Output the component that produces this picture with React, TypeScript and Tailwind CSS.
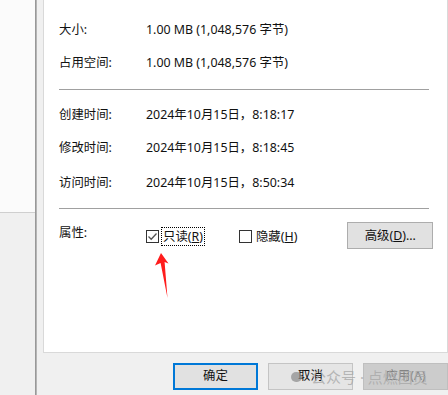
import React from "react";

const font = {
  fontFamily: '"Segoe UI", "Noto Sans", "Noto Sans CJK SC", sans-serif',
};

const rows1 = [
  { label: "大小:", value: "1.00 MB (1,048,576 字节)" },
  { label: "占用空间:", value: "1.00 MB (1,048,576 字节)" },
];

const rows2 = [
  { label: "创建时间:", value: "2024年10月15日，8:18:17" },
  { label: "修改时间:", value: "2024年10月15日，8:18:45" },
  { label: "访问时间:", value: "2024年10月15日，8:50:34" },
];

function Row({ label, value, className }: { label: string; value: string; className?: string }) {
  return (
    <div className={"flex h-[20px] items-center leading-[20px] " + (className ?? "")}>
      <div className="w-[87px]">{label}</div>
      <div>{value}</div>
    </div>
  );
}

function Checkbox({ checked }: { checked?: boolean }) {
  return (
    <div className="w-[13px] h-[13px] border border-[#333] bg-white flex items-center justify-center">
      {checked && (
        <svg width="11" height="11" viewBox="0 0 11 11">
          <path d="M1.5 5.5 L4.2 8.2 L9.5 2.5" fill="none" stroke="#555" strokeWidth="1.3" />
        </svg>
      )}
    </div>
  );
}

export default function App() {
  return (
    <div
      className="w-[448px] h-[395px] flex overflow-hidden bg-[#f0f0f0] text-[12.4px] text-[#111] relative"
      style={font}
    >
      {/* background window on the left */}
      <div className="w-[36px] flex flex-col">
        <div className="h-[213px] bg-[#fbfbfb] border-b border-[#cfcfcf]" />
        <div className="flex-1 bg-[#f0f0f0]" />
      </div>
      <div className="w-[2px] bg-gradient-to-r from-[#8a8a8a] to-[#c4c4c4]" />

      {/* dialog */}
      <div className="flex-1 flex flex-col bg-[#f0f0f0] pl-[6px]">
        <div className="h-[353px] bg-white border-l border-b border-r border-[#d9d9d9] pl-[15px] overflow-hidden">
          <div className="h-[20px] -mt-[18px] mb-[18px] flex leading-[20px]">
            <div className="w-[87px]">位置:</div>
            <div>C:\Users\Administrator\Desktop\test_file</div>
          </div>
          <Row {...rows1[0]} />
          <Row {...rows1[1]} className="mt-[13px]" />
          <div className="mt-[16px] w-[370px] h-px bg-[#a0a0a0]" />
          <Row {...rows2[0]} className="mt-[15px]" />
          <Row {...rows2[1]} className="mt-[13px]" />
          <Row {...rows2[2]} className="mt-[15px]" />
          <div className="mt-[15px] w-[370px] h-px bg-[#a0a0a0]" />

          <div className="mt-[13px] flex items-start">
            <div className="w-[87px] mt-[1px] leading-[20px]">属性:</div>
            <div className="mt-[8px]">
              <Checkbox checked />
            </div>
            <div className="ml-[2px] mt-[5px] h-[19px] px-[1px] border border-dotted border-black leading-[17px]">
              只读(<span className="underline">R</span>)
            </div>
            <div className="ml-[34px] mt-[8px]">
              <Checkbox />
            </div>
            <div className="ml-[4px] mt-[6px] leading-[17px]">
              隐藏(<span className="underline">H</span>)
            </div>
            <button className="ml-[50px] w-[86px] h-[27px] bg-[#e1e1e1] border border-[#adadad] leading-[25px]">
              高级(<span className="underline">D</span>)...
            </button>
          </div>
        </div>

        {/* bottom buttons */}
        <div className="mt-[10px] flex pl-[130px] gap-[10px]">
          <button className="w-[85px] h-[27px] shrink-0 bg-[#e1e1e1] border-2 border-[#0078d7]">确定</button>
          <button className="w-[85px] h-[27px] shrink-0 bg-[#e5e5e5] border border-[#c4c4c4]">取消</button>
          <button className="w-[85px] h-[27px] shrink-0 bg-[#cccccc] border border-[#bfbfbf] text-[#838383]">
            应用(A)
          </button>
        </div>
      </div>

      {/* red arrow annotation */}
      <svg className="absolute left-0 top-0 pointer-events-none" width="448" height="395">
        <polygon points="161,253 168.5,263.5 164.6,262 167.5,298 160.6,263 155,265.5" fill="#ff1c1c" />
      </svg>

      {/* watermark */}
      <div className="absolute left-[291px] top-[366px] flex items-center text-[15px] text-[#a8a8a8]/80 pointer-events-none">
        <div className="w-[11px] h-[10px] rounded-full bg-[#8a8a8a]/70" />
        <span className="ml-[9px]">公众号 · 点燃团员</span>
      </div>
    </div>
  );
}
